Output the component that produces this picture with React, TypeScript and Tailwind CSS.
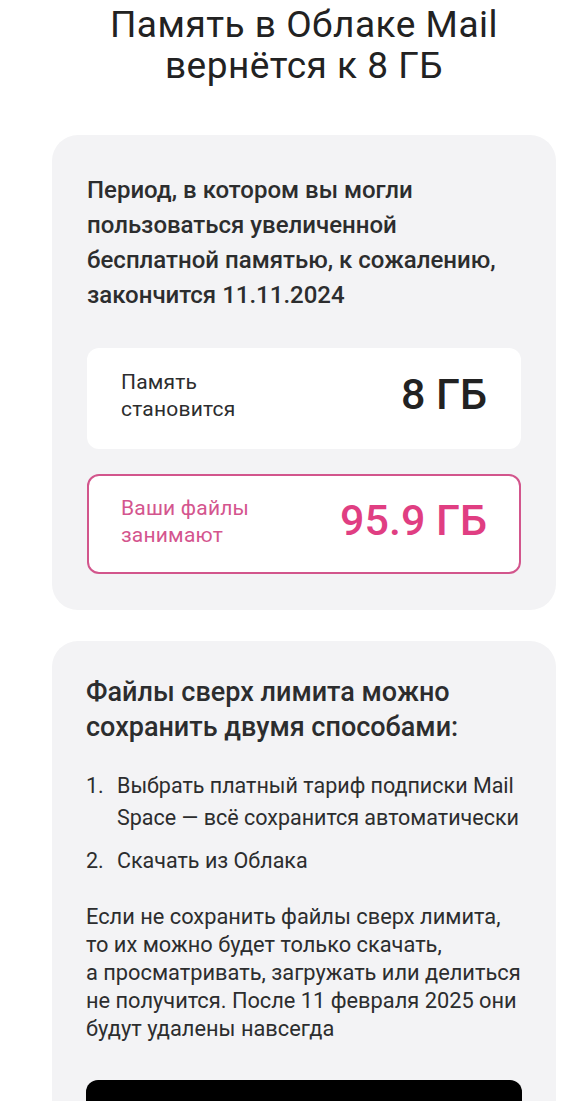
import React from 'react';

const font = { fontFamily: 'Roboto, "Liberation Sans", sans-serif' };

export default function App() {
  return (
    <div className="min-h-screen bg-white pl-[52px] text-[#2c2d2e]" style={font}>
      <div className="w-[504px]">
        <h1 className="pt-[4px] text-center text-[37px] font-normal leading-[41px] tracking-[0.5px] text-[#222]">
          Память в Облаке Mail
          <br />
          вернётся к 8 ГБ
        </h1>

        {/* Period card */}
        <div className="mt-[49px] rounded-[26px] bg-[#f3f3f5] px-[35px] pb-[36px] pt-[38px]">
          <p className="whitespace-nowrap text-[24px] font-medium leading-[35px] text-[#2c2d2e]">
            Период, в котором вы могли
            <br />
            пользоваться увеличенной
            <br />
            бесплатной памятью, к сожалению,
            <br />
            закончится 11.11.2024
          </p>

          <div className="mt-[35px] flex h-[101px] items-center justify-between rounded-[12px] bg-white pb-[5px] pl-[34px] pr-[34px]">
            <div className="text-[21px] leading-[27px] tracking-[0.2px] text-[#2c2d2e]">
              Память
              <br />
              становится
            </div>
            <div className="pb-[3px] text-[43px] font-medium leading-none text-[#222]">8 ГБ</div>
          </div>

          <div className="mt-[25px] flex h-[100px] items-center justify-between rounded-[12px] border-2 border-[#d2558c] bg-white pb-[5px] pl-[32px] pr-[32px]">
            <div className="text-[21px] leading-[27px] tracking-[0.2px] text-[#d4558e]">
              Ваши файлы
              <br />
              занимают
            </div>
            <div className="pb-[3px] text-[43px] font-medium leading-none text-[#e03e82]">95.9 ГБ</div>
          </div>
        </div>

        {/* Ways card */}
        <div className="mt-[31px] rounded-[26px] bg-[#f3f3f5] px-[34px] pb-[20px] pt-[34px]">
          <h2 className="whitespace-nowrap text-[27px] font-medium leading-[35px] text-[#2c2d2e]">
            Файлы сверх лимита можно
            <br />
            сохранить двумя способами:
          </h2>

          <ol className="mt-[25px] space-y-[11px] whitespace-nowrap text-[21.5px] leading-[32px] text-[#2c2d2e]">
            <li className="flex">
              <span className="w-[31px] shrink-0">1.</span>
              <span>
                Выбрать платный тариф подписки Mail
                <br />
                Space — всё сохранится автоматически
              </span>
            </li>
            <li className="flex">
              <span className="w-[31px] shrink-0">2.</span>
              <span>Скачать из Облака</span>
            </li>
          </ol>

          <p className="mt-[26px] whitespace-nowrap text-[21.8px] leading-[28px] text-[#2c2d2e]">
            Если не сохранить файлы сверх лимита,
            <br />
            то их можно будет только скачать,
            <br />
            а просматривать, загружать или делиться
            <br />
            не получится. После 11 февраля 2025 они
            <br />
            будут удалены навсегда
          </p>

          <button className="mt-[37px] h-[66px] w-full rounded-[12px] bg-black text-[20px] font-medium text-white">
            Перейти в Mail Space
          </button>
        </div>
      </div>
    </div>
  );
}
